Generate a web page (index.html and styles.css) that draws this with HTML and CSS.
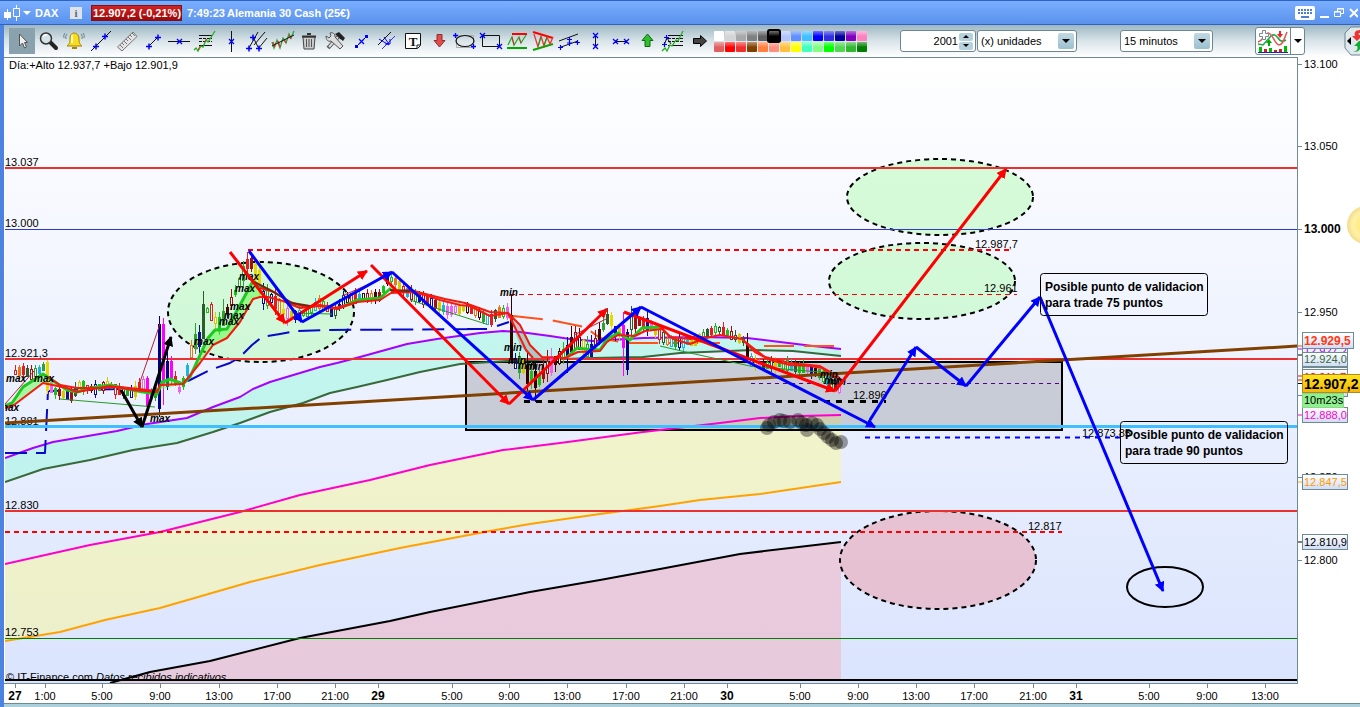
FILE: index.html
```html
<!DOCTYPE html>
<html lang="es">
<head>
<meta charset="utf-8">
<title>DAX - Alemania 30 Cash</title>
<link rel="stylesheet" href="styles.css">
</head>
<body>
<div class="window">
<header class="titlebar">
  <svg class="title-icon" width="17" height="16" viewBox="0 0 17 16"><path d="M3.500 4V15M12.500 0V16" stroke="#fff"/><path d="M0 7h7v6H0z" fill="#fff"/><path d="M9.500 3.500h6v8h-6z" fill="#6a9ef4" stroke="#fff"/></svg>
  <svg class="title-caret" width="8" height="5" viewBox="0 0 8 5"><path d="M0 0h8L4 4z" fill="#fff"/></svg>
  <span class="symbol">DAX</span>
  <button class="info" aria-label="Información">i</button>
  <span class="quote">12.907,2 (-0,21%)</span>
  <span class="clock">7:49:23</span>
  <span class="name">Alemania 30 Cash (25€)</span>
  <div class="win-controls">
    <button aria-label="Teclado"><svg width="20" height="14" viewBox="0 0 20 14"><rect width="20" height="14" rx="2" fill="#fff"/><path d="M3 4h14M3 7h14" stroke="#4b80d8" stroke-width="2" stroke-dasharray="2 1"/><path d="M6 11h8" stroke="#4b80d8" stroke-width="2"/></svg></button>
    <button aria-label="Minimizar"><svg width="9" height="14" viewBox="0 0 9 14"><path d="M0 11h9" stroke="#fff" stroke-width="2"/></svg></button>
    <button aria-label="Restaurar"><svg width="10" height="14" viewBox="0 0 10 14"><path d="M3.500 5V2.500h6v5H7M3 3h7M.5 5.500h6v5h-6zM0 6h7" fill="none" stroke="#fff"/></svg></button>
    <button aria-label="Cerrar"><svg width="9" height="14" viewBox="0 0 9 14"><path d="M1 3l8 8M9 3l-8 8" stroke="#fff" stroke-width="2"/></svg></button>
  </div>
</header>
<nav class="toolbar" aria-label="Herramientas">
  <div class="tools" id="tools">
    <button class="tool active" aria-label="Cursor"><svg viewBox="0 0 26 26"><path d="M10.500 6v12l3-3 2 5 2-1-2-4.500h3z" fill="#eee" stroke="#555"/></svg></button>
    <button class="tool" aria-label="Lupa"><svg viewBox="0 0 26 26"><path d="M15 14l6 6" stroke="#222" stroke-width="4" stroke-linecap="round"/><circle cx="11" cy="10.500" r="5.500" fill="#d4e3e8" stroke="#333" stroke-width="1.500"/><path d="M8 9q1-3 4-2" fill="none" stroke="#fff" stroke-width="1.500"/></svg></button>
    <button class="tool" aria-label="Alarma"><svg viewBox="0 0 26 26"><path d="M6 18c3-2 3-5 3-8 0-3 2-5 4-5s5 2 5 5c0 3 0 6 3 8z" fill="#f8dc20" stroke="#a88400"/><path d="M11 19h5v2h-5z" fill="#a88400"/><path d="M11 7v8" stroke="#fffbb0" stroke-width="2"/><path d="M6 6q-2 2-1 5M4 5q-2 2-1 5M20 6q2 2 1 5M22 5q2 2 1 5" fill="none" stroke="#67828f"/></svg></button>
    <button class="tool" aria-label="Recta"><svg viewBox="0 0 26 26"><path d="M4 23L24 3" stroke="#111"/><path d="M6 18.500h6M9 15.500v6M15 8.500h6M18 5.500v6" stroke="#00f" stroke-width="1.500"/></svg></button>
    <button class="tool" aria-label="Regla"><svg viewBox="0 0 26 26"><path d="M4.500 19L20 4l4 4.500L9 23z" fill="#e4e4e4" stroke="#777"/><path d="M7 17l3 3M9 15l2 2M11 13l3 3M13 11l2 2M15 9l3 3M17 7l2 2M19 5l3 3" stroke="#777"/></svg></button>
    <button class="tool" aria-label="Segmento"><svg viewBox="0 0 26 26"><path d="M10 18l9-9" stroke="#111"/><path d="M7 18.500h6M10 15.500v6M16 9.500h6M19 6.500v6" stroke="#00f" stroke-width="1.500"/></svg></button>
    <button class="tool" aria-label="Horizontal"><svg viewBox="0 0 26 26"><path d="M3 13.500h22" stroke="#111"/><path d="M12 11l5 5M17 11l-5 5" stroke="#00f" stroke-width="1.300"/></svg></button>
    <button class="tool" aria-label="Retroceso"><svg viewBox="0 0 26 26"><path d="M8 7.500h13M8 17.500h13" stroke="#111"/><path d="M8 10.500h13M8 13.500h13" stroke="#111" stroke-dasharray="3 1"/><path d="M3 22l2-2 2 3 3-5 2 1 3-7 2 2 7-11" fill="none" stroke="#20b020" stroke-width="1.300"/><path d="M7 22l2-4M14 14l2-3" stroke="#e22"/></svg></button>
    <button class="tool" aria-label="Vertical"><svg viewBox="0 0 26 26"><path d="M14.500 3v21" stroke="#111"/><path d="M12 11l5 5M17 11l-5 5" stroke="#00f" stroke-width="1.300"/></svg></button>
    <button class="tool" aria-label="Horquilla"><svg viewBox="0 0 26 26"><path d="M6 20L15 4M15 21L24 10M11 17L22 4M10 9l6 12" stroke="#111"/><path d="M3 20.500h6M6 17.500v6M7 9.500h6M10 6.500v6M13 20.500h6M16 17.500v6" stroke="#00f" stroke-width="1.500"/></svg></button>
    <button class="tool" aria-label="Regresión"><svg viewBox="0 0 26 26"><path d="M3 14l2 6 3-8 3 8 3-10 3 5 3-9 2 4 3-7" fill="none" stroke="#24a33c" stroke-width="1.300"/><path d="M4 14l2 5M9 13l2 6M15 11l2 4M20 7l2 4" stroke="#e33" stroke-width="1.500"/><path d="M3 18L25 7" stroke="#111"/></svg></button>
    <button class="tool" aria-label="Eliminar"><svg viewBox="0 0 26 26"><path d="M8 9h12l-1 12H9z" fill="#ccc" stroke="#444"/><path d="M7 8.500h14M12 6h4" stroke="#333" stroke-width="2"/><path d="M11.500 11v8M14 11v8M16.500 11v8" stroke="#555"/></svg></button>
    <button class="tool" aria-label="Configurar"><svg viewBox="0 0 26 26"><path d="M7 20L17 9" stroke="#555" stroke-width="4"/><path d="M8 19L17 9" stroke="#ddd" stroke-width="2"/><path d="M14 6l4-2 6 6-2 3-4-3z" fill="#222"/><path d="M5 8l3 2 2-2-1-3c3-1 5 1 5 4l8 9-3 3-9-8c-3 1-5-1-5-5z" fill="#ddd" stroke="#555"/></svg></button>
    <button class="tool" aria-label="Línea corta"><svg viewBox="0 0 26 26"><path d="M10 18l9-9" stroke="#111"/><path d="M8 17h3v3H8zM18 7h3v3h-3z" fill="#00f"/><path d="M12 11l5 5M17 11l-5 5" stroke="#00f" stroke-width="1.300"/></svg></button>
    <button class="tool" aria-label="Paralelas"><svg viewBox="0 0 26 26"><path d="M5 17L18 4" stroke="#111"/><path d="M9 21L22 8" stroke="#33f"/><path d="M6 11l10 6M11 9l5 7M12 16h5v-5" fill="none" stroke="#00f"/></svg></button>
    <button class="tool" aria-label="Texto"><svg viewBox="0 0 26 26"><path d="M6.500 5.500h15v12l-3 3h-12z" fill="#fff" stroke="#111"/><path d="M18 20v-3h3" fill="none" stroke="#111"/><text x="14" y="18" class="icon-t">T</text></svg></button>
    <button class="tool" aria-label="Flecha abajo"><svg viewBox="0 0 26 26"><path d="M12 6.500h5v6h3l-5.500 6.500L9 12.500h3z" fill="#e24b4b" stroke="#8d3030"/></svg></button>
    <button class="tool" aria-label="Elipse"><svg viewBox="0 0 26 26"><path d="M5.500 7.500h17v12h-17z" fill="none" stroke="#aaa"/><ellipse cx="14" cy="13" rx="9" ry="5.500" fill="none" stroke="#111" stroke-width="1.200"/><path d="M2 7.500h5M4.500 5v5M20 18.500h5M22.500 16v5" stroke="#00f" stroke-width="1.300"/></svg></button>
    <button class="tool" aria-label="Rectángulo"><svg viewBox="0 0 26 26"><path d="M5.500 7.500h17v11h-17z" fill="none" stroke="#111"/><path d="M3 5l5 5M8 5l-5 5M20 16l5 5M25 16l-5 5" stroke="#00f" stroke-width="1.300"/></svg></button>
    <button class="tool" aria-label="Rango"><svg viewBox="0 0 26 26"><path d="M9 6h15" stroke="red" stroke-width="2"/><path d="M4 20h20" stroke="#0a0" stroke-width="2"/><path d="M5 17l4-8 2 8 5-8 2 6 5-8" fill="none" stroke="#20b030" stroke-width="1.300"/><path d="M9 9l2 8M16 10l2 5" stroke="#e22"/></svg></button>
    <button class="tool" aria-label="Triángulo"><svg viewBox="0 0 26 26"><path d="M4 4l20 6" stroke="red" stroke-width="2"/><path d="M4 22l20-6" stroke="#0a0" stroke-width="2"/><path d="M5 6l4 13 3-11 3 10 3-9 3 7 3-7" fill="none" stroke="#e33" stroke-width="1.300"/><path d="M9 18l3-9M15 17l3-8" stroke="#0a0"/></svg></button>
    <button class="tool" aria-label="Canal"><svg viewBox="0 0 26 26"><path d="M4 13L23 6M6 19l17-6" stroke="#111"/><path d="M3 19.500h5M5.500 17v5M20 14.500h5M22.500 12v5M14.500 9v9M12 11.500h5M12 15h5" stroke="#00f" stroke-width="1.200"/></svg></button>
    <button class="tool" aria-label="Distancia vertical"><svg viewBox="0 0 26 26"><path d="M14.500 8v11" stroke="#111"/><path d="M12 5l5 5M17 5l-5 5M12 16l5 5M17 16l-5 5" stroke="#00f" stroke-width="1.300"/></svg></button>
    <button class="tool" aria-label="Distancia horizontal"><svg viewBox="0 0 26 26"><path d="M9 13.500h11" stroke="#111"/><path d="M6 11l5 5M11 11l-5 5M17 11l5 5M22 11l-5 5" stroke="#00f" stroke-width="1.300"/></svg></button>
    <button class="tool" aria-label="Flecha arriba"><svg viewBox="0 0 26 26"><path d="M12 18.500h5v-6h3L14.500 6 9 12.500h3z" fill="#2cc02c" stroke="#136613"/></svg></button>
    <button class="tool" aria-label="Extensión"><svg viewBox="0 0 26 26"><path d="M9 7.500h15M9 17.500h15" stroke="#111"/><path d="M9 10.500h15M9 13.500h15" stroke="#111" stroke-dasharray="3 1"/><path d="M3 23l3-3 2 3 3-6 2 1 4-6 2 1 5-10" fill="none" stroke="#20b020" stroke-width="1.300"/><path d="M5 17l3-7 4 6" fill="none" stroke="#111"/><path d="M3 16.500h5M5.500 14v5M5 9.500h5M7.500 7v5" stroke="#00f" stroke-width="1.200"/></svg></button>
    <button class="tool" aria-label="Flecha derecha"><svg viewBox="0 0 26 26"><path d="M8.500 10.500h7v-3l6 5.500-6 5.500v-3h-7z" fill="#444" stroke="#000"/></svg></button>
  </div>
  <div class="palette" id="palette" role="group" aria-label="Colores"></div>
  <div class="spinner"><input type="text" value="2001" aria-label="Cantidad"><span class="steps"><button aria-label="Más"><svg width="6" height="3" viewBox="0 0 6 3"><path d="M0 3l3-3 3 3z"/></svg></button><button aria-label="Menos"><svg width="6" height="3" viewBox="0 0 6 3"><path d="M0 0l3 3 3-3z"/></svg></button></span></div>
  <div class="drop drop-units"><select aria-label="Unidad"><option>(x) unidades</option></select></div>
  <div class="drop drop-time"><select aria-label="Intervalo"><option>15 minutos</option></select></div>
  <div class="indicator">
    <button class="ind-main" aria-label="Indicadores"><svg width="32" height="24" viewBox="0 0 32 24"><path d="M1 15l5 1 8-9q4-3 7 2t8 2" fill="none" stroke="#21a845" stroke-width="1.500"/><path d="M1 13c6-2 6-8 10-9s7 12 11 12 5-6 8-13" fill="none" stroke="#d55" stroke-width="1.500"/><path d="M5.500 1.500h3v3h3v3h-3v3h-3v-3h-3v-3h3z" fill="#fff" stroke="#789"/><path d="M11 17v-3H9l3-4 3 4h-2v3z" fill="#0a0"/><path d="M22 2h2v3h2l-3 4-3-4h2z" fill="#e22"/><path d="M2 23v-5h3v5M12 23v-4h3v4M27 23v-6h3v6" fill="#0b0"/><path d="M7 23v-3h3v3M17 23v-2h3v2M22 23v-3h3v3" fill="#c22"/><path d="M1 23.500h30" stroke="#22c"/></svg></button>
    <button class="ind-drop" aria-label="Más indicadores"><svg width="8" height="4" viewBox="0 0 8 4"><path d="M0 0h8L4 4z"/></svg></button>
  </div>
  <button class="side-tab" aria-label="Panel lateral"><svg width="16" height="30" viewBox="0 0 16 30"><path d="M7 1L1 7v15l6 7h12V1z" fill="#dfe9ee" stroke="#6d8790"/><path d="M3 15l4-4v8z"/><path d="M16 4c-5 0-6 3-5 6H8l5 5 3-3v-3c-2 0-2-2 0-2z" fill="#e33"/><path d="M9 26c5-1 5-4 4-6h-3l5-5h1v8c-1 2-3 3-7 3z" fill="#1a3"/></svg></button>
</nav>
<main class="chart">
<svg class="canvas" viewBox="4 57 1356 647" role="img" aria-label="Gráfico DAX 15 minutos">
  <defs>
    <linearGradient id="bg" x1="0" y1="0" x2="0" y2="1"><stop offset="0" stop-color="#fff"/><stop offset="1" stop-color="#dae4fd"/></linearGradient>
    <linearGradient id="gold" x1="0" y1="0" x2="0" y2="1"><stop offset="0" stop-color="#ffe51c"/><stop offset="1" stop-color="#f3b60a"/></linearGradient>
    <linearGradient id="tag" x1="0" y1="0" x2="0" y2="1"><stop offset="0" stop-color="#fff"/><stop offset="1" stop-color="#cfdcf6"/></linearGradient>
    <radialGradient id="sun"><stop offset="0" stop-color="#ffe65c"/><stop offset=".7" stop-color="#fff1a8"/><stop offset="1" stop-color="#f3dc8c"/></radialGradient>
    <marker id="head-r" markerUnits="userSpaceOnUse" markerWidth="12" markerHeight="12" refX="9" refY="5" orient="auto"><path d="M0 0l10 5-10 5z" fill="red"/></marker>
    <marker id="head-b" markerUnits="userSpaceOnUse" markerWidth="12" markerHeight="12" refX="9" refY="5" orient="auto"><path d="M0 0l10 5-10 5z" fill="#00f"/></marker>
    <marker id="head-k" markerUnits="userSpaceOnUse" markerWidth="12" markerHeight="12" refX="9" refY="5" orient="auto"><path d="M0 0l10 5-10 5z"/></marker>
    <clipPath id="plot"><rect x="5" y="58" width="1292" height="625"/></clipPath>
  </defs>
  <rect x="4" y="57" width="1356" height="647" fill="#fff"/>
  <rect x="5" y="58" width="1293" height="625" fill="url(#bg)"/>
  <g clip-path="url(#plot)">
    <path class="fill-cyan" d="M5 458L33 448 53 442 82 437 117 431 147 424 187 418 213 407 240 397 253 389 270 382 290 376 320 367 337 363 360 357 407 344 437 339 480 333 503 331 520 332 550 336 570 339 593 341 643 338 700 337 747 338 780 342 813 346 841 349V356L793 351 753 350 680 353 643 357 593 358 507 361 460 364 420 372 387 380 357 387 330 393 303 403 270 412 240 423 213 432 177 443 133 450 90 460 43 469 5 482z"/>
    <path class="fill-yellow" d="M5 564L90 545 160 532 240 512 300 495 370 480 430 465 503 450 560 443 643 432 720 423 760 418 800 416 841 415V482L760 494 700 500 660 506 600 514 530 524 490 531 400 548 320 565 250 582 160 608 105 620 60 632 5 641z"/>
    <path class="fill-pink" d="M110 683L150 672 210 661 300 638 390 621 430 612 530 592 600 580 660 569 740 554 790 548 841 542V680z"/>
    <rect x="466" y="362" width="596" height="68" class="zone"/>
    <ellipse class="oval green" cx="261" cy="312" rx="93" ry="50"/>
    <ellipse class="oval green" cx="940" cy="197" rx="93" ry="38"/>
    <ellipse class="oval green" cx="922" cy="281" rx="93" ry="38"/>
    <ellipse class="oval rose" cx="938" cy="560" rx="98" ry="49"/>
    <ellipse cx="1165" cy="587" rx="38" ry="20" fill="none" stroke="#000" stroke-width="2"/>
    <path class="ln" stroke="#a600ff" d="M5 458L33 448 53 442 82 437 117 431 147 424 187 418 213 407 240 397 253 389 270 382 290 376 320 367 337 363 360 357 407 344 437 339 480 333 503 331 520 332 550 336 570 339 593 341 643 338 700 337 747 338 780 342 813 346 841 349"/>
    <path class="ln" stroke="#38693a" d="M841 356L793 351 753 350 680 353 643 357 593 358 507 361 460 364 420 372 387 380 357 387 330 393 303 403 270 412 240 423 213 432 177 443 133 450 90 460 43 469 5 482"/>
    <path class="ln" stroke="#f0c" d="M5 564L90 545 160 532 240 512 300 495 370 480 430 465 503 450 560 443 643 432 720 423 760 418 800 416 841 415"/>
    <path class="ln" stroke="#ffa200" d="M5 641L60 632 105 620 160 608 250 582 320 565 400 548 490 531 530 524 600 514 660 506 700 500 760 494 841 482"/>
    <path class="ln" stroke="#000" d="M110 683L150 672 210 661 300 638 390 621 430 612 530 592 600 580 660 569 740 554 790 548 841 542"/>
    <path class="ln" stroke="#0808c8" stroke-dasharray="22 9" d="M5 453H45L48 391 118 389M188 381L210 370 230 363 240 357 252 345 262 337 280 334 297 331 330 330 480 329M467 329h20M497 326l12-4"/>
    <path class="ln" stroke="#ff5218" stroke-dasharray="30 10" d="M513 316L550 320 585 327 600 338 625 343 670 343 720 343M764 346h77"/>
    <path d="M5 168H1298M5 359H1298M5 511H1298" stroke="#eb3030" stroke-width="2"/>
    <path d="M5 229.500H1298" stroke="#3038d0"/>
    <path d="M5 638.500H1298" stroke="#008000"/>
    <path d="M5 680H1298" stroke="#000" stroke-width="2"/>
    <g class="level">
      <text x="5" y="166">13.037</text><text x="5" y="227">13.000</text><text x="5" y="357">12.921,3</text><text x="5" y="425">12.881</text><text x="5" y="509">12.830</text><text x="5" y="636">12.753</text>
      <text x="975" y="248">12.987,7</text><text x="984" y="292">12.961</text><text x="853" y="399">12.896</text><text x="1082" y="437">12.873,85</text><text x="1028" y="530">12.817</text>
      <text x="6" y="681">© IT-Finance.com  <tspan font-style="italic">Datos recibidos indicativos</tspan></text>
    </g>
    <path d="M248 250H1013M5 532H1062" stroke="red" stroke-width="2" stroke-dasharray="5 4"/>
    <path d="M510 294.500H1017" stroke="red" stroke-dasharray="5 4"/>
    <path d="M524 401.500H886" stroke="#000" stroke-width="3" stroke-dasharray="6 6"/>
    <path d="M865 437.500H1124" stroke="#00f" stroke-width="2" stroke-dasharray="5 5"/>
    <path d="M751 383.500H1062" stroke="#508" stroke-dasharray="4 4"/>
    <g id="candles"></g>
    <path d="M5 406L12 403 23 387 43 374 50 379 67 388V389L43 383 14 405 5 408zM157 394L162 382 170 379 183 384 190 377 200 355 208 338 215 330 227 329 240 305 253 281 261 287V298H255L240 322 227 338 213 345 200 363 183 384 158 390z" fill="#50ff30" opacity=".45"/>
    <path d="M508 312L520 325 530 345 542 357 550 359 532 358 520 346z" fill="#777" opacity=".35"/>
    <path class="ma green-ma" d="M5 406L12 403 23 387 43 374 55 382 67 390 77 392 90 388 110 385 127 389 143 392 157 394 162 382 170 379 183 384 190 377 200 355 208 338 215 330 227 329 240 305 253 281 261 287 268 290M337 309L357 300 380 298 391 288M566 358L577 348 586 349 600 350 607 339 618 333 630 340 642 328 662 327"/>
    <path class="ma red-ma" d="M5 408L14 405 43 383 67 388 77 392 110 386 133 390 157 392 160 385 183 384 200 363 213 345 227 338 240 322 253 299 260 297 268 297 283 301 300 308 320 306 337 309 357 302 380 300 391 293 410 292 425 295 440 300 460 305 470 306 490 316 508 313 520 325 530 345 542 357 565 358 578 352 600 351 607 342 618 335 635 336 645 331 662 329 673 339 690 344 705 338 720 335 742 339 755 352 770 360 790 365 810 366 822 368 832 376 841 380"/>
    <path class="ma red-ma" d="M48 377L60 385 77 388 100 388 120 387 157 391M260 288L274 292 290 302 305 307 320 305 335 308 355 303M391 292L410 290 445 299 465 303 490 312 508 313 526 350 533 358M660 326L670 337 690 339 705 337M744 341L765 357 790 363 820 366 839 377"/>
    <path d="M254 282L270 290 292 303 310 306M390 290L410 291" fill="none" stroke="#6b2a10" stroke-width="2"/>
    <path d="M5 404L34 371M140 382L160 324M342 296L392 274M574 335L606 319" stroke="#b62035"/>
    <path d="M60 399L155 407M292 313L332 314M410 300L486 324M660 346L690 353 750 366 830 373" fill="none" stroke="#239b23"/>
    <path d="M5 423L1298 346" stroke="#804000" stroke-width="3"/>
    <path d="M5 426.500H1298" stroke="#40bfff" stroke-width="3"/>
    <g fill="#000" id="smudge"></g>
    <g class="pivot"><text x="6" y="382">max</text><text x="34" y="382">max</text><text x="-1" y="411">max</text><text x="150" y="422">max</text><text x="194" y="345">max</text><text x="219" y="325">max</text><text x="224" y="319">max</text><text x="230" y="310">max</text><text x="235" y="292">max</text><text x="239" y="280">max</text><text x="500" y="296">min</text><text x="504" y="351">min</text><text x="508" y="364">min</text><text x="518" y="369">min</text><text x="526" y="370">min</text><text x="820" y="378">min</text><text x="824" y="384">min</text><text x="828" y="385">min</text></g>
    <g class="trend" stroke="red"><path d="M230 252L285 323"/><path d="M285 323L367 271"/><path d="M371 265L509 404"/><path d="M509 404L607 309"/><path d="M624 312L835 391"/><path d="M835 391L1006 169"/></g>
    <g class="trend blue" stroke="#00f"><path d="M249 251L302 322"/><path d="M302 322L392 272"/><path d="M392 272L533 400"/><path d="M533 400L641 307"/><path d="M641 307L875 427"/><path d="M870 420L916 347"/><path d="M916 347L966 386"/><path d="M966 386L1040 297"/><path d="M1040 297L1163 591"/></g>
    <g class="trend black" stroke="#000"><path d="M121 390L142 427"/><path d="M142 427L171 337"/></g>
    <g class="note"><rect x="1040.500" y="273.500" width="167" height="42" rx="3"/><text x="1045" y="291">Posible punto de validacion</text><text x="1045" y="307">para trade 75 puntos</text>
    <rect x="1120.500" y="421.500" width="167" height="42" rx="3"/><text x="1125" y="439">Posible punto de validacion</text><text x="1125" y="455">para trade 90 puntos</text></g>
    <text x="9" y="69" class="axis">Día:+Alto 12.937,7 +Bajo 12.901,9</text>
  </g>
  <path d="M4 57.500H1298M1297.500 57V684M4 683.500H1298M4 703.500H1360" stroke="#708a92" fill="none"/>
  <g class="axis" id="prices"></g>
  <g class="axis" id="times"></g>
  <path d="M1298 346h5" stroke="#ff4500"/><path d="M1298 349h5" stroke="#a0f"/><path d="M1298 355h5M1298 383.500h5M1298 542h5" stroke="#000"/><path d="M1298 376h5M1298 380h5" stroke="red"/><path d="M1298 415h5" stroke="#f0c"/><path d="M1298 482h5" stroke="#ffa200"/>
  <g class="tags">
    <rect x="1302.500" y="345.500" width="45" height="14"/><text x="1304" y="355" fill="#a0f">12.927,2</text>
    <rect x="1302.500" y="367.500" width="45" height="14"/>
    <rect x="1302.500" y="369.500" width="45" height="14"/><text x="1304" y="381" fill="red">12.911,7</text>
    <rect x="1302.500" y="382.500" width="45" height="14"/>
    <rect x="1302.500" y="352.500" width="45" height="14"/><text x="1304" y="363" fill="#38693a">12.924,0</text>
    <rect x="1302.500" y="332.500" width="51" height="16"/><text x="1304" y="345" class="mid" fill="#ff3a10">12.929,5</text>
    <rect x="1302.500" y="407.500" width="45" height="15"/><text x="1304" y="419" fill="#f0c">12.888,0</text>
    <rect x="1302.500" y="474.500" width="45" height="15"/><text x="1304" y="486" fill="#f90">12.847,5</text>
    <rect x="1302.500" y="534.500" width="45" height="15"/><text x="1304" y="546">12.810,9</text>
    <rect x="1302.500" y="374.500" width="60" height="18" class="now"/><text x="1304" y="389" class="big">12.907,2</text>
    <rect x="1302.500" y="393.500" width="41" height="14" class="left"/><text x="1304" y="404">10m23s</text>
  </g>
  <circle cx="1366" cy="225" r="19" fill="url(#sun)"/>
</svg>
</main>
<footer class="status"></footer>
</div>
<script src="chart.js"></script>
</body>
</html>
```
FILE: styles.css
```css
* { box-sizing: border-box; }
body { margin: 0; font-family: "Liberation Sans", Arial, sans-serif; font-size: 11px; background: #abcfdb; overflow-x: hidden; }
button { border: 0; padding: 0; margin: 0; background: none; font: inherit; display: flex; align-items: center; justify-content: center; }
.window { border-left: 4px solid #4c82e0; }
.titlebar { height: 25px; margin-left: -4px; display: flex; align-items: center; padding: 1px 2px 0 4px; color: #fff; font-weight: bold; background: linear-gradient(#7aaeff, #5a92ec); border-top: 1px solid #2c63c4; border-bottom: 1px solid #2c63c4; white-space: nowrap; }
.title-caret { margin: 0 4px 0 2px; }
.symbol { width: 35px; }
.info { width: 12px; height: 12px; background: #dde3ea; color: #5c6770; font: bold 11px/12px "Liberation Serif", serif; margin-right: 9px; }
.quote { height: 16px; line-height: 14px; background: linear-gradient(#d32222, #9c0808); border: 1px solid #7e1212; padding: 0 1px; margin-right: 5px; width: 91px; }
.clock { width: 40px; }
.win-controls { margin-left: auto; display: flex; align-items: center; gap: 5px; }
.toolbar { height: 32px; display: flex; align-items: center; padding-left: 5px; background: linear-gradient(#9db7c3, #d9e4e9 50%, #fff); overflow: hidden; }
.tools { display: flex; }
.tool { width: 26px; height: 26px; }
.tool svg { width: 26px; height: 26px; display: block; }
.tool.active { background: #8aa2ae; }
.icon-t { font: bold 13px "Liberation Serif", serif; text-anchor: middle; fill: #111; }
.palette { display: grid; grid-template-columns: repeat(14, 10px); grid-auto-rows: 10px; gap: 1px; margin-left: 3px; }
.swatch { border-radius: 1px; background-image: linear-gradient(#ffffff70, #ffffff20 40%, #ffffff00 50%); }
.swatch.chosen { box-shadow: 0 0 0 2px #000; z-index: 1; }
.spinner, .drop { height: 22px; border: 1px solid #6d8790; border-radius: 3px; background: #fff; display: flex; align-items: center; position: relative; }
.spinner { width: 76px; margin-left: 33px; padding-right: 2px; }
.spinner input { width: 57px; border: 0; background: none; padding: 0; text-align: right; font: inherit; outline: 0; }
.steps { width: 15px; height: 17px; margin-left: 1px; display: flex; flex-direction: column; gap: 1px; }
.steps button { flex: 1; background: #b4d1dd; border-radius: 2px; }
.drop select { appearance: none; width: 100%; height: 20px; border: 0; background: none; font: inherit; padding: 0 3px; color: #000; outline: 0; }
.drop::before { content: ""; position: absolute; right: 2px; top: 2px; width: 16px; height: 16px; background: linear-gradient(#c0d9e3, #9cc0cf); border-radius: 2px; }
.drop::after { content: ""; position: absolute; right: 6px; top: 8px; border: 4px solid transparent; border-top-color: #000; border-bottom: 0; }
.drop-units { width: 100px; margin-left: 1px; }
.drop-time { width: 93px; margin-left: 43px; }
.indicator { width: 50px; height: 28px; border: 1px solid #6d8790; border-radius: 3px; background: #fff; display: flex; margin-left: 42px; }
.ind-main { width: 35px; border-right: 1px solid #6d8790; }
.ind-drop { flex: 1; }
.side-tab { margin-left: auto; }
.chart { background: #fff; }
.canvas { display: block; width: 100%; height: auto; }
.fill-cyan { fill: #a0f7e0; opacity: .55; }
.fill-yellow { fill: #f6f6a8; opacity: .6; }
.fill-pink { fill: #f0b8c8; opacity: .6; }
.zone { fill: #606060; fill-opacity: .25; stroke: #000; stroke-width: 2; }
.oval { stroke: #000; stroke-width: 2; stroke-dasharray: 5 4; fill-opacity: .55; }
.green { fill: #b8fcb8; }
.rose { fill: #eaa0ae; }
.ln { fill: none; stroke-width: 2; stroke-linejoin: round; }
.ma { fill: none; stroke-linejoin: round; }
.green-ma { stroke: #1fc81f; stroke-width: 3; }
.red-ma { stroke: #f51a10; stroke-width: 2; }
.trend { stroke-width: 3; }
.trend path { marker-end: url(#head-r); }
.trend.blue path { marker-end: url(#head-b); }
.trend.black path { marker-end: url(#head-k); }
.level, .axis, .tags { font-size: 11px; white-space: pre; }
.pivot { font: italic bold 10px "Liberation Sans", Arial, sans-serif; }
.note { font-weight: bold; font-size: 12px; }
.note rect { fill: none; stroke: #000; }
.axis .strong { font-size: 12px; font-weight: bold; }
.tags rect { fill: url(#tag); stroke: #708a92; }
.tags .mid { font-size: 12px; font-weight: bold; }
.tags .big { font-size: 14px; font-weight: bold; }
.tags .now { fill: url(#gold); stroke: #b08a20; }
.tags .left { fill: #8ff08f; stroke: #8ad98a; }
.status { height: 3px; background: #abcfdb; }
```
FILE: chart.js
```js
const NS = 'http://www.w3.org/2000/svg';
function add(parent, name, attrs, text) {
  const el = document.createElementNS(NS, name);
  for (const k in attrs) el.setAttribute(k, attrs[k]);
  if (text) el.textContent = text;
  parent.appendChild(el);
}
const byId = id => document.getElementById(id);

// Colour palette, two rows of fourteen
const colours = ['#fff', '#d4d4d4', '#a8a8a8', '#808080', '#606060', '#000', '#b4c4ff', '#6090ff', '#40c0ff', '#0000ff', '#3030e0', '#0000a0', '#8000c0', '#ff80c0',
  '#e06060', '#ff0000', '#f03030', '#804000', '#ff8040', '#ff9080', '#ffc040', '#ffff00', '#40ffc0', '#80ff80', '#00ff00', '#50d850', '#30b830', '#008000'];
colours.forEach((c, i) => {
  const b = document.createElement('button');
  b.className = i === 5 ? 'swatch chosen' : 'swatch';
  b.style.backgroundColor = c;
  b.setAttribute('aria-label', 'Color ' + c);
  byId('palette').appendChild(b);
});

// Axes
[[64, '13.100'], [146, '13.050'], [229, '13.000'], [312, '12.950'], [395, ''], [477, '12.850'], [560, '12.800']].forEach(([y, t]) => {
  add(byId('prices'), 'path', { d: `M1298 ${y + .5}h4`, stroke: '#708a92' });
  add(byId('prices'), 'text', { x: 1304, y: y + 4, class: t === '13.000' ? 'strong' : '' }, t);
});
[[15, '27'], [45, '1:00'], [102, '5:00'], [160, '9:00'], [219, '13:00'], [277, '17:00'], [335, '21:00'], [378, '29'], [452, '5:00'], [509, '9:00'], [567, '13:00'], [626, '17:00'], [684, '21:00'], [727, '30'], [800, '5:00'], [858, '9:00'], [916, '13:00'], [974, '17:00'], [1033, '21:00'], [1076, '31'], [1149, '5:00'], [1207, '9:00'], [1265, '13:00']].forEach(([x, t]) => {
  add(byId('times'), 'path', { d: `M${x + .5} 684v4`, stroke: '#708a92' });
  add(byId('times'), 'text', { x, y: 700, 'text-anchor': 'middle', class: t.length === 2 ? 'strong' : '' }, t);
});

// Candles: mid-price path, with the wide bars given one by one
const mids = [[11, 398], [15, 372], [23, 370], [32, 374], [43, 367], [52, 390], [70, 396], [80, 385], [95, 389], [107, 384], [117, 390], [133, 393], [142, 383], [152, 395], [172, 374], [180, 391], [187, 370], [193, 342], [200, 338], [208, 306], [215, 320], [220, 325], [230, 303], [240, 280], [248, 260], [257, 270], [263, 297], [270, 297], [278, 305], [285, 312], [297, 315], [310, 310], [320, 302], [333, 314], [343, 300], [363, 296], [380, 296], [387, 280], [393, 278], [400, 287], [417, 298], [427, 300], [447, 310], [467, 308], [480, 315], [490, 320], [497, 312], [507, 312], [513, 362], [527, 367], [535, 385], [547, 367], [558, 358], [575, 340], [590, 352], [606, 320], [617, 333], [633, 320], [650, 325], [668, 342], [693, 342], [700, 337], [717, 328], [730, 335], [743, 340], [750, 360], [760, 365], [780, 364], [807, 369], [820, 373], [830, 383], [839, 388]];
const big = { 47: [360, 394, 362, 390, '#e8d800'], 147: [376, 410, 378, 406, '#f0f'], 159: [316, 417, 324, 408, '#000080'], 163: [318, 405, 324, 385, '#f0f'], 167: [352, 390, 361, 386, '#000080'], 171: [356, 384, 361, 380, '#f0f'], 203: [291, 339, 304, 338, '#2c5b2c'], 247: [252, 275, 259, 268, '#e02020'], 255: [260, 286, 264, 279, '#e8d800'], 259: [260, 296, 270, 290, '#e8d800'], 283: [300, 325, 309, 314, '#e8d800'], 511: [295, 362, 315, 357, '#300'], 527: [352, 392, 365, 383, '#300'], 535: [361, 402, 371, 387, '#300'], 567: [337, 373, 345, 355, '#000080'], 607: [308, 325, 314, 323, '#2c5b2c'], 611: [312, 330, 315, 325, '#e8d800'], 623: [312, 376, 325, 347, '#f0f'], 627: [329, 375, 332, 369, '#000080'], 747: [333, 361, 343, 357, '#300'] };
const inks = ['#18c018', '#400808', '#e02020', '#18b8d8', '#d8c800', '#a01010', '#f060f0', '#2c5b2c', '#e87818', '#101090', '#30a030'];
let seed = 7;
const rnd = () => (seed = seed * 16807 % 2147483647) / 2147483647;
for (let x = 15; x < 841; x += 4) {
  let k = 0;
  while (k < mids.length - 2 && mids[k + 1][0] < x) k++;
  const [x0, y0] = mids[k], [x1, y1] = mids[k + 1];
  const y = Math.round(y0 + (y1 - y0) * (x - x0) / (x1 - x0));
  const busy = (x > 186 && x < 290) || (x > 510 && x < 650);
  const half = Math.round(2 + rnd() * (busy ? 6 : 3));
  const c = big[x] || [y - half - Math.round(rnd() * (busy ? 12 : 5)), y + half + Math.round(rnd() * (busy ? 9 : 5)), y - half, y + half, inks[Math.floor(rnd() * inks.length)]];
  add(byId('candles'), 'path', { d: `M${x + .5} ${c[0]}V${c[1]}`, stroke: c[4] });
  const hollow = !big[x] && rnd() > .6;
  add(byId('candles'), 'rect', { x: x - .5, y: c[2] + .5, width: 2, height: c[3] - c[2], fill: hollow ? '#fff' : c[4], stroke: c[4] });
}

// Brush marks
[[767, 428], [769, 425], [774, 422], [780, 420], [784, 421], [790, 422], [798, 420], [802, 423], [806, 425], [807, 430], [812, 423], [817, 425], [820, 429], [824, 433], [828, 437], [832, 440], [836, 443], [841, 442]].forEach(([cx, cy]) =>
  add(byId('smudge'), 'circle', { cx, cy, r: 7, opacity: .38 }));
```
